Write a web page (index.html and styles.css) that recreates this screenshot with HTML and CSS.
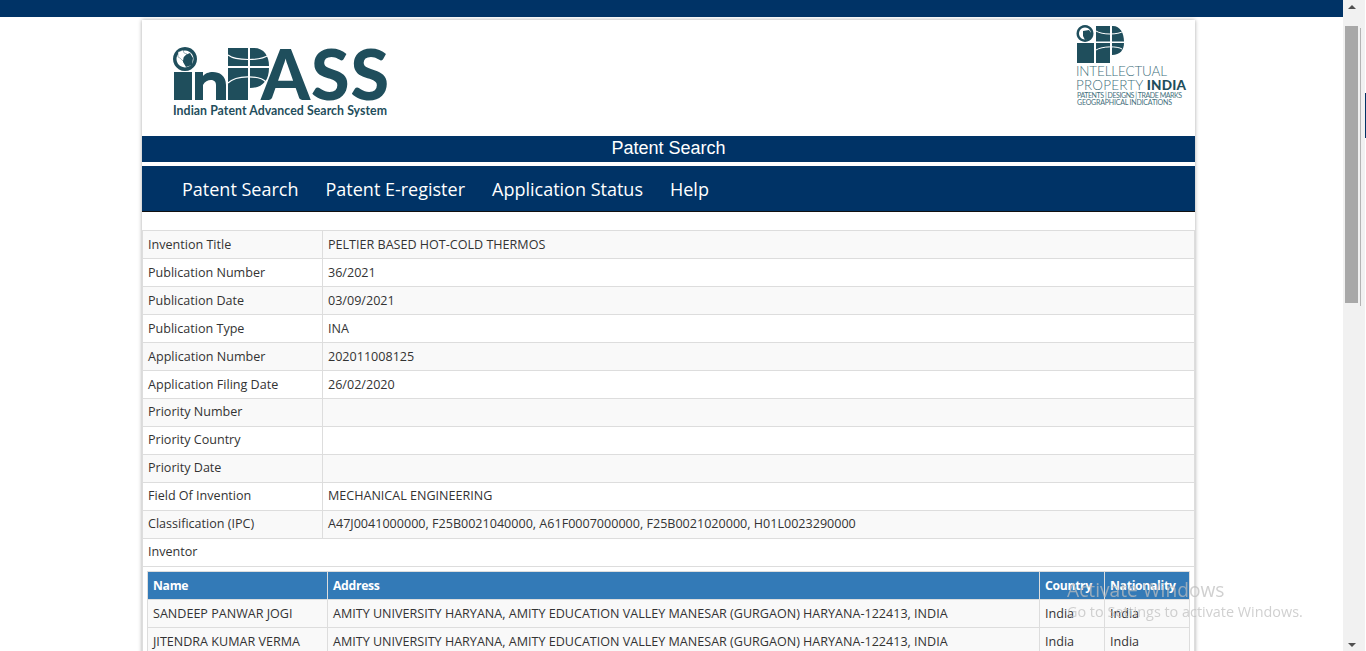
FILE: index.html
```html
<!DOCTYPE html>
<html lang="en">
<head>
<meta charset="utf-8">
<title>Patent Search</title>
<link rel="stylesheet" href="styles.css">
</head>
<body>
<div class="viewport">
  <div class="topbar"></div>
  <div class="page">
    <header class="brand">
      <svg class="logo-inpass" viewBox="0 0 240 76" aria-label="InPASS">
        <g fill="#1f4e5c">
          <path fill-rule="evenodd" d="M12 1a12 12 0 1 0 .01 0zM12 4.500a8.500 8.500 0 1 1-.01 0z"/>
          <path d="M10 10l7-3 3 5-1 7-6 2-3-5z"/>
          <rect x="1" y="26" width="18" height="28"/>
          <path d="M22 26h8v4c4-6 23-7 23 9v15H43V39c0-7-10-6-13 0v15H22z"/>
          <path d="M55 2h20v18H55zM77 2h4c10 0 15 8 15 18H77zM55 22h20v32H55zM77 22h19c0 13-7 20-19 20z"/>
        </g>
        <path d="M5 6l5-2 1 3 3 1-3 3-1 4-3-3-2-1z" fill="#fff" stroke="#1f4e5c" stroke-width=".4"/>
        <path d="M55 9c8 6 32 6 41 0M55 37c8-8 32-8 38-1" fill="none" stroke="#fff" stroke-width="1.200"/>
        <text class="logo-word" x="88" y="54" textLength="128" lengthAdjust="spacing">ASS</text>
        <text class="logo-tag" x="0" y="69" textLength="214">Indian Patent Advanced Search System</text>
      </svg>
      <svg class="logo-ipindia" viewBox="0 0 112 88" aria-label="Intellectual Property India">
        <g fill="#1f4e5c">
          <path fill-rule="evenodd" d="M9 0a8.500 8.500 0 1 0 .01 0zM9 2.500a6 6 0 1 1-.01 0z"/>
          <path d="M7 6l6-1 3 4-2 5-5 1-2-4z"/>
          <rect x="1" y="18" width="17" height="20"/>
          <path d="M20 1h14v15.500H20zM36 1h1c7 0 11 7 11 15.500H36zM20 18h14v20H20zM36 18h12c0 7-4 12-12 12z"/>
        </g>
        <path d="M20 6c6 4 22 4 28 0M20 25c6-4 22-4 26-1" fill="none" stroke="#fff" stroke-width="1"/>
        <text class="ip-main" x="0" y="51" textLength="91">INTELLECTUAL</text>
        <text class="ip-main" x="0" y="64.500" textLength="110">PROPERTY <tspan class="ip-bold">INDIA</tspan></text>
        <text class="ip-small" x="1" y="73" textLength="105">PATENTS | DESIGNS | TRADE MARKS</text>
        <text class="ip-small" x="1" y="80" textLength="95">GEOGRAPHICAL INDICATIONS</text>
      </svg>
    </header>
    <div class="title-bar">Patent Search</div>
    <nav class="nav">
      <a>Patent Search</a>
      <a>Patent E-register</a>
      <a>Application Status</a>
      <a>Help</a>
    </nav>
    <table class="details">
      <colgroup><col class="label-col"><col></colgroup>
      <tbody>
        <tr><td>Invention Title</td><td>PELTIER BASED HOT-COLD THERMOS</td></tr>
        <tr><td>Publication Number</td><td>36/2021</td></tr>
        <tr><td>Publication Date</td><td>03/09/2021</td></tr>
        <tr><td>Publication Type</td><td>INA</td></tr>
        <tr><td>Application Number</td><td>202011008125</td></tr>
        <tr><td>Application Filing Date</td><td>26/02/2020</td></tr>
        <tr class="raised"><td>Priority Number</td><td></td></tr>
        <tr class="raised"><td>Priority Country</td><td></td></tr>
        <tr class="raised"><td>Priority Date</td><td></td></tr>
        <tr class="raised"><td>Field Of Invention</td><td>MECHANICAL ENGINEERING</td></tr>
        <tr class="raised"><td>Classification (IPC)</td><td>A47J0041000000, F25B0021040000, A61F0007000000, F25B0021020000, H01L0023290000</td></tr>
        <tr class="plain raised"><td colspan="2">Inventor</td></tr>
        <tr class="plain"><td colspan="2" class="nested-cell">
          <table class="inventors">
            <colgroup><col class="c-name"><col><col class="c-country"><col class="c-nat"></colgroup>
            <thead><tr><th>Name</th><th>Address</th><th>Country</th><th>Nationality</th></tr></thead>
            <tbody>
              <tr><td>SANDEEP PANWAR JOGI</td><td>AMITY UNIVERSITY HARYANA, AMITY EDUCATION VALLEY MANESAR (GURGAON) HARYANA-122413, INDIA</td><td>India</td><td>India</td></tr>
              <tr><td>JITENDRA KUMAR VERMA</td><td>AMITY UNIVERSITY HARYANA, AMITY EDUCATION VALLEY MANESAR (GURGAON) HARYANA-122413, INDIA</td><td>India</td><td>India</td></tr>
            </tbody>
          </table>
        </td></tr>
      </tbody>
    </table>
  </div>
</div>
<aside class="scrollbar">
  <span class="arrow up"></span>
  <div class="track"><div class="thumb"></div><div class="thumb-line"></div></div>
  <span class="arrow down"></span>
  <span class="edge-mark"></span>
</aside>
<div class="watermark">
  <div class="wm-title">Activate Windows</div>
  <div class="wm-sub">Go to Settings to activate Windows.</div>
</div>
</body>
</html>
```
FILE: styles.css
```css
* { box-sizing: border-box; }
html, body { margin: 0; height: 100%; overflow: hidden; }
body {
  display: flex;
  background: #fff;
  font-family: "Open Sans", sans-serif;
  font-size: 12.57px;
  color: #333;
}
.viewport { flex: 1; min-width: 0; height: 651px; overflow: hidden; }
.topbar { height: 17px; background: #003366; }
.page {
  width: 1053px;
  height: 700px;
  margin: 3px 0 0 142px;
  background: #fff;
  box-shadow: 0 0 4px rgba(0,0,0,.35);
}
.brand {
  height: 116px;
  display: flex;
  justify-content: space-between;
  align-items: flex-start;
}
.logo-inpass { width: 240px; height: 76px; margin: 26px 0 0 31px; }
.logo-ipindia { width: 112px; height: 88px; margin: 5px 7px 0 0; }
.logo-word { font: 900 70px "Lato", sans-serif; fill: #1f4e5c; }
.logo-tag { font: 700 12.300px "Lato", sans-serif; fill: #1f4e5c; }
.ip-main { font: 300 13.500px "Lato", sans-serif; fill: #3f6f7c; }
.ip-bold { font-weight: 900; fill: #1f4e5c; }
.ip-small { font: 400 7px "Lato", sans-serif; fill: #3f6f7c; }
.title-bar {
  height: 26px;
  background: #003366;
  color: #fff;
  font: 400 18px/24px "Liberation Sans", sans-serif;
  text-align: center;
  margin-bottom: 4px;
}
.nav {
  height: 46px;
  background: #003366;
  border-bottom: 1px solid #111;
  display: flex;
  align-items: center;
  gap: 27px;
  padding-left: 40px;
  color: #fff;
  font-size: 18px;
}
.details {
  width: 1053px;
  margin-top: 18px;
  border-collapse: collapse;
  table-layout: fixed;
}
.label-col { width: 180px; }
.details > tbody > tr > td {
  height: 28px;
  padding: 0 5px;
  border: 1px solid #ddd;
  vertical-align: middle;
}
.details > tbody > tr.raised > td { padding-bottom: 2px; }
.details > tbody > tr:nth-child(odd) > td { background: #f9f9f9; }
.details > tbody > tr.plain > td { background: #fff; }
.details > tbody > tr > td.nested-cell { padding: 4px 4px 0; vertical-align: top; }
.inventors { width: 1043px; border-collapse: collapse; table-layout: fixed; }
.c-name { width: 180px; }
.c-country { width: 65px; }
.c-nat { width: 85px; }
.inventors th {
  height: 28px;
  padding: 0 5px;
  background: #337ab7;
  color: #fff;
  text-align: left;
  font-size: 12.200px;
  letter-spacing: -.3px;
  font-weight: 700;
  border: 1px solid #ddd;
}
.inventors td {
  height: 28px;
  padding: 0 5px;
  background: #f9f9f9;
  border: 1px solid #ddd;
}
.scrollbar {
  position: relative;
  width: 23px;
  height: 651px;
  flex: none;
  background: #f1f1f1;
  border-right: 1px solid #fff;
  display: flex;
  flex-direction: column;
  align-items: flex-start;
}
.track { flex: 1; width: 100%; padding: 17px 0 0 2px; display: flex; align-items: flex-start; gap: 2px; }
.thumb { width: 13px; height: 277px; background: #a8a8a8; }
.thumb-line { width: 1px; height: 278px; margin-top: 2px; background: #b4b4b4; }
.arrow { width: 0; height: 0; flex: none; margin: 5px 0 0 5px; border-left: 4px solid transparent; border-right: 4px solid transparent; }
.arrow.up { border-bottom: 4px solid #505050; }
.arrow.down { border-top: 4px solid #505050; margin: 0 0 4px 5px; }
.edge-mark { position: absolute; right: -1px; top: 93px; width: 1px; height: 45px; background: #003366; }
.watermark {
  position: fixed;
  left: 1067px;
  top: 577px;
  color: rgba(190,190,190,.72);
  white-space: nowrap;
}
.wm-title { font: 400 19.200px/25px "Open Sans", sans-serif; }
.wm-sub { font: 400 14.400px/20px "Open Sans", sans-serif; }
```
